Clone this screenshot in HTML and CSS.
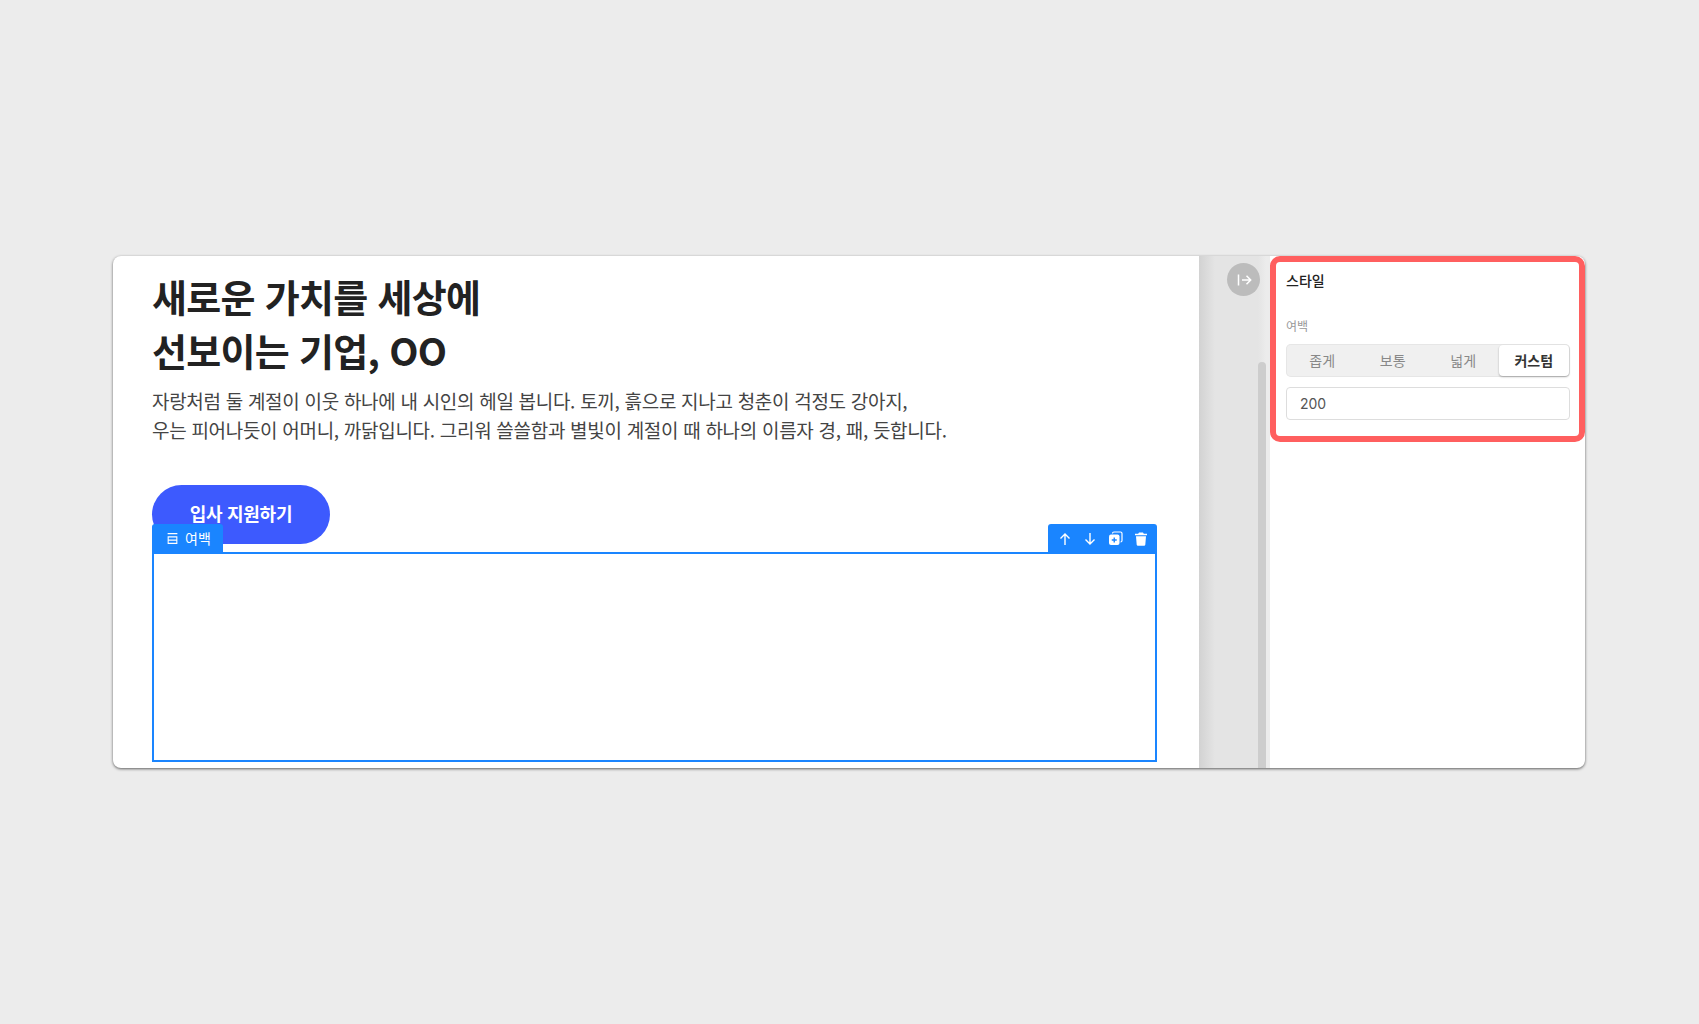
FILE: index.html
```html
<!DOCTYPE html>
<html lang="ko">
<head>
<meta charset="utf-8">
<title>스타일</title>
<link rel="stylesheet" href="styles.css">
</head>
<body>
<main class="card">
  <section class="canvas">
    <h1 class="title">새로운 가치를 세상에<br>선보이는 기업, OO</h1>
    <p class="lead">자랑처럼 둘 계절이 이웃 하나에 내 시인의 헤일 봅니다. 토끼, 흙으로 지나고 청춘이 걱정도 강아지,<br>우는 피어나듯이 어머니, 까닭입니다. 그리워 쓸쓸함과 별빛이 계절이 때 하나의 이름자 경, 패, 듯합니다.</p>
    <a class="cta">입사 지원하기</a>
    <div class="spacer">
      <div class="tag">
        <svg class="tag-icon" viewBox="0 0 12 12" width="13" height="13"><path d="M1.500 1.500h9M2 4.500h8v6H2zM2 7.500h8" fill="none" stroke="#fff" stroke-width="1"/></svg>
        <span>여백</span>
      </div>
      <div class="tools">
        <svg viewBox="0 0 14 14" width="14" height="14"><path d="M7 13V2M2.500 6.500 7 2l4.500 4.500" fill="none" stroke="#fff" stroke-width="1.400"/></svg>
        <svg viewBox="0 0 14 14" width="14" height="14"><path d="M7 1v11M2.500 7.500 7 12l4.500-4.500" fill="none" stroke="#fff" stroke-width="1.400"/></svg>
        <svg viewBox="0 0 15 15" width="15" height="15"><path d="M4.500 2.500q0-1.500 1.500-1.500h6.500q1.500 0 1.500 1.500v7q0 1.500-1.500 1.500" fill="none" stroke="#fff" stroke-width="1.200"/><rect x="1" y="3.500" width="10.500" height="10.500" rx="2" fill="#fff"/><path d="M6.250 6.500v5M3.750 9h5" stroke="#1a85ff" stroke-width="1.400"/></svg>
        <svg viewBox="0 0 14 14" width="14" height="14"><path d="M5 .5h4l.8 1.200H13v1.600H1V1.700h3.200zM2 4.300h10l-.7 8.400q-.1 1.100-1.200 1.100H3.900q-1.100 0-1.200-1.100z" fill="#fff"/></svg>
      </div>
    </div>
  </section>
  <aside class="gutter">
    <button class="collapse" aria-label="패널 접기">
      <svg viewBox="0 0 16 16" width="16" height="16"><path d="M2.500 2.500v11M6 8h8.500M10.500 3.800 14.700 8l-4.200 4.200" fill="none" stroke="#fff" stroke-width="1.500"/></svg>
    </button>
    <div class="thumb"></div>
  </aside>
  <section class="panel">
    <div class="highlight">
      <h2 class="panel-title">스타일</h2>
      <div class="field-label">여백</div>
      <div class="segments">
        <span class="segment">좁게</span>
        <span class="segment">보통</span>
        <span class="segment">넓게</span>
        <span class="segment active">커스텀</span>
      </div>
      <input class="value" value="200">
    </div>
  </section>
</main>
</body>
</html>
```
FILE: styles.css
```css
* { box-sizing: border-box; }
html, body { margin: 0; height: 100%; }
body {
  background: #ececec;
  display: flex;
  align-items: center;
  padding-left: 113px;
  font-family: "Noto Sans CJK KR", "Noto Sans", sans-serif;
  color: #222;
}
.card {
  width: 1472px;
  height: 512px;
  display: flex;
  background: #fff;
  border-radius: 8px;
  overflow: hidden;
  box-shadow: 0 1px 3px rgba(0,0,0,.6);
}
.canvas {
  width: 1086px;
  padding: 13px 41px 6px 39px;
  display: flex;
  flex-direction: column;
  align-items: flex-start;
}
.title {
  margin: 0;
  font-size: 38px;
  line-height: 54px;
  font-weight: 700;
  letter-spacing: -.7px;
  color: #222;
}
.lead {
  margin: 9px 0 0;
  font-size: 19px;
  line-height: 29px;
  letter-spacing: -.3px;
  color: #444;
  white-space: nowrap;
}
.cta {
  margin-top: 41px;
  width: 178px;
  height: 59px;
  padding-bottom: 3px;
  border-radius: 30px;
  background: #3d5afe;
  color: #fff;
  font-size: 18px;
  font-weight: 700;
  letter-spacing: -.3px;
  display: flex;
  align-items: center;
  justify-content: center;
}
.spacer {
  position: relative;
  margin-top: 8px;
  width: 1005px;
  height: 210px;
  border: 2px solid #1a85ff;
}
.tag, .tools {
  position: absolute;
  top: -30px;
  height: 29px;
  background: #1a85ff;
  color: #fff;
  display: flex;
  align-items: center;
  border-radius: 3px 3px 0 0;
}
.tag {
  left: -2px;
  width: 71px;
  padding-left: 14px;
  gap: 6px;
  font-size: 14px;
}
.tag span { position: relative; top: -1px; }
.tools {
  right: -2px;
  width: 109px;
  padding: 0 9px 0 10px;
  justify-content: space-between;
}
.gutter {
  position: relative;
  width: 71px;
  background: linear-gradient(90deg, #d2d2d2 0, #e4e4e4 16px, #e4e4e4 59px, #ececec 67px);
}
.collapse {
  position: absolute;
  left: 28px;
  top: 7px;
  width: 33px;
  height: 33px;
  padding: 0;
  border: 0;
  border-radius: 50%;
  background: #bcbcbc;
  display: flex;
  align-items: center;
  justify-content: center;
}
.thumb {
  position: absolute;
  left: 59px;
  top: 106px;
  bottom: 0;
  width: 8px;
  background: #cdcdcd;
  border-radius: 4px 4px 0 0;
}
.panel { flex: 1; min-width: 0; }
.highlight {
  height: 186px;
  padding: 8px 9px 0 10px;
  border: 6px solid #ff5f5f;
  border-radius: 10px;
  background: #fff;
}
.panel-title {
  margin: 0;
  font-size: 14px;
  line-height: 20px;
  font-weight: 500;
  color: #222;
}
.field-label {
  margin-top: 28px;
  font-size: 12px;
  line-height: 16px;
  color: #999;
}
.segments {
  margin-top: 10px;
  height: 33px;
  display: grid;
  grid-template-columns: repeat(4, 1fr);
  padding: 1px;
  background: #f0f0f0;
  border-radius: 5px;
  box-shadow: inset 0 0 0 1px #e6e6e6;
}
.segment {
  display: flex;
  align-items: center;
  justify-content: center;
  font-size: 14px;
  color: #888;
  padding-bottom: 2px;
}
.segment.active {
  background: #fff;
  border-radius: 4px;
  color: #333;
  font-weight: 700;
  box-shadow: 0 1px 2px rgba(0,0,0,.3);
}
.value {
  display: block;
  margin-top: 10px;
  width: 100%;
  height: 33px;
  padding: 0 13px;
  border: 1px solid #ddd;
  border-radius: 4px;
  font: 14px "Inter", "Noto Sans", sans-serif;
  color: #555;
}
```
